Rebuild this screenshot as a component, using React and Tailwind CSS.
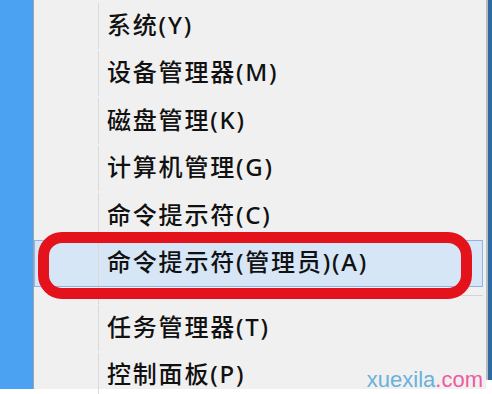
import React from "react";

const rowsTop = ["系统(Y)", "设备管理器(M)", "磁盘管理(K)", "计算机管理(G)", "命令提示符(C)"];
const rowsBottom = ["任务管理器(T)", "控制面板(P)"];

function Row({ label, active }) {
  return (
    <div
      className={
        "flex h-[47.5px] items-center border " +
        (active ? "bg-[#d6e6f7] border-[#8fb4e2]" : "border-transparent")
      }
    >
      <div className="w-[64px] h-full border-r border-[#dadada] shrink-0" />
      <div className="pl-[8px] pb-[2px] text-[24px] tracking-[1.8px] font-medium text-[#111] leading-none whitespace-nowrap">
        {label}
      </div>
    </div>
  );
}

export default function App() {
  return (
    <div
      className="relative w-[492px] h-[394px] bg-white overflow-hidden flex"
      style={{ fontFamily: '"Noto Sans", "Noto Sans CJK SC", sans-serif' }}
    >
      <div className="w-[33px] h-[389px] bg-[#4ca2f2] shrink-0" />
      <div className="w-[453px] h-[389px] bg-[#f0f0f0] border-l border-[#9aa4ad] pt-[2px] pr-[3px] shrink-0">
        {rowsTop.map((r) => (
          <Row key={r} label={r} />
        ))}
        <Row label="命令提示符(管理员)(A)" active />
        <div className="flex h-[17px] items-center">
          <div className="w-[65px] h-full border-r border-[#dadada] shrink-0" />
          <div className="flex-1 h-px bg-[#d4d4d4]" />
        </div>
        {rowsBottom.map((r) => (
          <Row key={r} label={r} />
        ))}
      </div>
      <div className="w-[2px] h-[380px] bg-[#b9bcc0] shrink-0" />
      <div className="w-[4px] h-[380px] bg-[#2f6aa3] shrink-0" />

      <div className="absolute left-[38px] top-[232px] w-[434px] h-[67px] rounded-[24px] border-[11px] border-[#e3121b]" />

      <div
        className="absolute right-[9px] bottom-[3px] text-[22px] leading-none"
        style={{ fontFamily: '"Liberation Sans", Arial, sans-serif' }}
      >
        <span className="text-[#6ab1d9]">xuexila</span>
        <span className="text-[#ee5c9f]">.com</span>
      </div>
    </div>
  );
}
